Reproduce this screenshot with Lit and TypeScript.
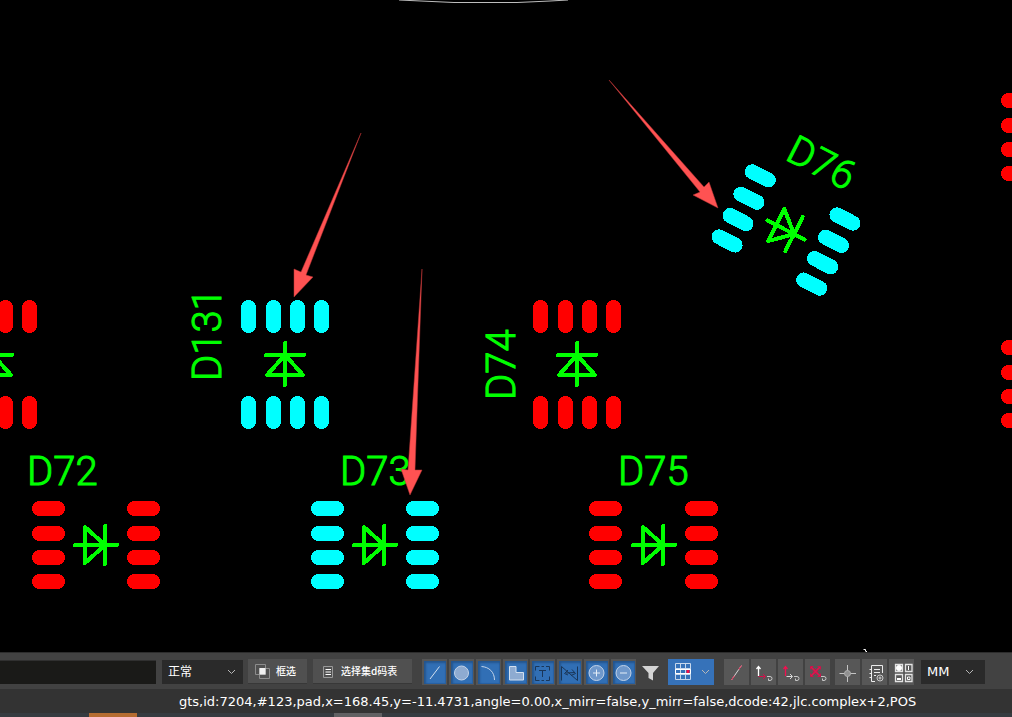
import { LitElement, html, css, svg } from "lit";
import { customElement } from "lit/decorators.js";

type Part = { x: number; y: number; angle: number; color: string; left?: number };
type Label = { x: number; y: number; angle: number; text: string };

const RED = "#ff0000";
const CYAN = "#00ffff";

const parts: Part[] = [
  { x: -7, y: 364, angle: -90, color: RED, left: -65 },
  { x: 285, y: 364, angle: -90, color: CYAN, left: -65 },
  { x: 577, y: 364, angle: -90, color: RED, left: -65 },
  { x: 96, y: 545, angle: 0, color: RED },
  { x: 375, y: 545, angle: 0, color: CYAN },
  { x: 654, y: 545, angle: 0, color: RED, left: -65 },
  { x: 786, y: 230, angle: 27, color: CYAN },
  { x: 1065, y: 137, angle: 0, color: RED },
  { x: 1065, y: 384, angle: 0, color: RED },
];

const labels: Label[] = [
  { x: 27, y: 485, angle: 0, text: "D72" },
  { x: 340, y: 485, angle: 0, text: "D73" },
  { x: 618, y: 485, angle: 0, text: "D75" },
  { x: 221, y: 381, angle: -90, text: "D131" },
  { x: 515, y: 400, angle: -90, text: "D74" },
  { x: 784, y: 159, angle: 27, text: "D76" },
];

const arrows = [
  "361,133 306,275 313,277 294,297 294,269 301,272",
  "422,269 415,470 422,470 410,495 401,469 408,470",
  "609,80 704,187 709,182 718,208 693,195 700,192",
];

const chevron = html`<svg class="chevron" viewBox="0 0 9 6" aria-hidden="true">
  <path d="M1 1 L4.5 4.5 L8 1" />
</svg>`;

const hook = svg`<path d="M16 17.500 h3 q2 0 2 2 q0 2 -2 2 h-1.500 v-2" stroke="#c8c8c8" />`;

const toggles = [
  { name: "Line", icon: svg`<path d="M8 20 L17.500 7.500" stroke="#d3e0f0" />` },
  { name: "Pad", icon: svg`<circle cx="12.500" cy="14" r="7" fill="#8eabd1" stroke="#c3d3e8" />` },
  { name: "Arc", icon: svg`<path d="M5.500 7.500 C13 8 18.500 13 18.500 21" stroke="#c3d3e8" />` },
  { name: "Surface", icon: svg`<path d="M6.500 7.500 H13 V13.500 H20.500 V21 H6.500 Z" fill="#8eabd1" stroke="#d3e0f0" />` },
  {
    name: "Text",
    icon: svg`<path d="M5.500 11.500 V7.500 H9.500 M11.500 7.500 H14 M16 7.500 H19.500 V11.500 M19.500 17.500 V21.500 H16 M14 21.500 H11.500 M9.500 21.500 H5.500 V17.500 M9 11.500 H16 M12.500 11.500 V18" stroke="#1a3658" />`,
  },
  {
    name: "Net",
    icon: svg`<path d="M4.500 21.500 V7.500 L20.500 21.500 V7.500 M7.500 14.500 L11 11 M7.500 14.500 L11 16 M9 14 L18 13.500 M15 10.500 L18.500 14.500 L14 16.500" stroke="#1a3658" />`,
  },
  {
    name: "Positive",
    icon: svg`<circle cx="12.500" cy="14" r="7.500" fill="#6f98cb" stroke="#c3d3e8" /><path d="M9 14 H16 M12.500 10.500 V17.500" stroke="#e4edf7" />`,
  },
  {
    name: "Negative",
    icon: svg`<circle cx="12.500" cy="14" r="7.500" fill="#6f98cb" stroke="#c3d3e8" /><path d="M9 14 H16" stroke="#e4edf7" />`,
  },
];

const snapTools = [
  {
    name: "Measure",
    icon: svg`<path d="M7.500 21 L17.500 6.500" stroke="#d8d8d8" /><path d="M7.500 21 L10.500 16.700 M14.800 10.500 L17.500 6.500" stroke="#e8305a" />`,
  },
  {
    name: "Vertical axis",
    icon: svg`<path d="M7.500 17 V8 M5.500 10 L7.500 7.500 L9.500 10" stroke="#ffffff" stroke-width="1.300" /><path d="M7.500 17.500 H14 M12 15 L14.500 17.500 L12 20" stroke="#d0104a" />${hook}`,
  },
  {
    name: "Horizontal axis",
    icon: svg`<path d="M7.500 17 V8 M5.500 10 L7.500 7.500 L9.500 10" stroke="#f01050" stroke-width="1.300" /><path d="M8.500 17.500 H14 M12 15 L14.500 17.500 L12 20" stroke="#d8d8d8" />${hook}`,
  },
  {
    name: "Clear snap",
    icon: svg`<path d="M6 8 L15 17 M15 8 L6 17" stroke="#e8104c" stroke-width="1.600" /><path d="M5.500 10.500 V7.500 H8.500 M12.500 7.500 H15.500 V10.500 M15.500 14.500 V17.500 H12.500 M8.500 17.500 H5.500 V14.500 M10.500 9.500 L13 12.500 L10.500 15.500 L8 12.500 Z" stroke="#d0104a" />${hook}`,
  },
];

const viewTools = [
  {
    name: "Origin",
    icon: svg`<path d="M4.500 14.500 H21 M12.500 6 V23" stroke="#c4c4c4" /><circle cx="12.500" cy="14.500" r="3" fill="#909090" stroke="#b0b0b0" />`,
  },
  {
    name: "Report settings",
    icon: svg`<path d="M13 22.500 H9.500 V6.500 H20.500 V14 M7.500 10.500 H10 M7.500 14.500 H10 M7.500 18.500 H10 M12 10.500 H18 M12 13.500 H18 M12 16.500 H14" stroke="#ececec" /><circle cx="18" cy="19" r="3" stroke="#c8c8c8" /><circle cx="18" cy="19" r="1" stroke="#d0d0d0" />`,
  },
  {
    name: "Layout",
    icon: svg`<path d="M6.500 5.500 H13.500 V12.500 H6.500 Z M16.500 5.500 H23 V12.500 H16.500 Z M6.500 15.500 H13.500 V22.500 H6.500 Z M16.500 15.500 H23 V22.500 H16.500 Z" stroke="#e4e4e4" stroke-width="1.300" /><circle cx="10" cy="9" r="3" fill="#fff" /><path d="M8 20 H12" stroke="#fff" stroke-width="2" /><path d="M19.500 7 V11 M18.500 18 H21 V20.500 H18.500 Z" stroke="#fff" />`,
  },
];

@customElement("pcb-canvas")
class PcbCanvas extends LitElement {
  static styles = css`
    :host { display: block; overflow: hidden; background: #000; }
    .board { display: block; width: 100%; height: 100%; }
    .copper { shape-rendering: crispEdges; }
    .diode { fill: none; stroke: #0f0; stroke-width: 4px; stroke-linecap: round; stroke-linejoin: round; }
    .label { fill: #0f0; stroke: #0f0; stroke-width: 1px; font: 300 40px Roboto, "Liberation Sans", sans-serif; }
    .arrow { fill: #ff5252; stroke: #b83434; stroke-width: 0.5px; }
    .outline { fill: none; stroke: #bdbdbd; }
  `;

  private part(p: Part) {
    return svg`<g class="copper" transform=${`translate(${p.x} ${p.y}) rotate(${p.angle})`}>
      ${[p.left ?? -64, 31].map((x) =>
        [-44, -19, 5, 29].map(
          (y) => svg`<rect x=${x} y=${y} width="33" height="15" rx="7.500" fill=${p.color} />`
        )
      )}
      <path class="diode" d="M-21 0 H21 M9 -19 V19 M9 0 L-11 -18 V18 Z" />
    </g>`;
  }

  render() {
    return html`<svg class="board" role="img" aria-label="PCB layout">
      <polyline class="outline" points="399,0 421,1 454,2.500 517,2.500 550,1 568,0" />
      ${parts.map((p) => this.part(p))}
      ${labels.map(
        (l) => svg`<text class="label" transform=${`translate(${l.x} ${l.y}) rotate(${l.angle})`}>${l.text}</text>`
      )}
      ${arrows.map((points) => svg`<polygon class="arrow" points=${points} />`)}
      <path d="M863.500 649.500 h2 v1.500 M865.500 651.500 h1.500" fill="none" stroke="#fff" />
    </svg>`;
  }
}

@customElement("app-root")
class AppRoot extends LitElement {
  static styles = css`
    :host {
      display: flex;
      flex-direction: column;
      height: 100vh;
      overflow: hidden;
      background: #000;
      color: #fff;
      font-family: "DejaVu Sans", "Noto Sans CJK SC", sans-serif;
    }
    pcb-canvas { flex: 1; min-height: 0; }
    .toolbar {
      display: flex;
      align-items: center;
      box-sizing: border-box;
      height: 37px;
      padding: 1px 27px 0 0;
      background: #424242;
      border-top: 1px solid #2c2c2c;
    }
    button, select, input { margin: 0; border: 0; padding: 0; color: #fff; font-family: inherit; }
    svg { fill: none; }
    .command { flex: 1; min-width: 0; height: 24px; background: #1a1a18; border-top: 1px solid #303030; box-sizing: border-box; }
    .picker { display: grid; align-items: center; background: #2a2a2a; }
    .picker > * { grid-area: 1 / 1; }
    .picker select { appearance: none; width: 100%; height: 24px; padding: 0 6px; background: transparent; font-size: 13px; }
    .mode { width: 81px; margin: 0 5px 0 6px; }
    .mode select { font-size: 12px; }
    .unit { width: 64px; margin-left: 7px; }
    .chevron { width: 9px; height: 6px; stroke: #b8b8b8; justify-self: end; margin-right: 7px; pointer-events: none; }
    .unit .chevron { margin-right: 11px; }
    .action {
      display: flex;
      align-items: center;
      height: 25px;
      padding: 0 0 0 7px;
      gap: 6px;
      margin-right: 6px;
      background: #505050;
      border-bottom: 1px solid #383838;
      font-family: "Noto Sans CJK SC", sans-serif;
      font-size: 10px;
      font-weight: 500;
      line-height: 12px;
      white-space: nowrap;
    }
    .frame { width: 59px; }
    .codes { width: 99px; padding-left: 8px; gap: 7px; margin-right: 10px; }
    .action svg { width: 15px; height: 15px; flex: none; }
    .codes svg { width: 13px; }
    .group { display: flex; gap: 2px; }
    .tool, .toggle { display: block; width: 25px; height: 26px; }
    .tool svg, .toggle svg { display: block; width: 25px; height: 26px; }
    .toggle {
      background: #316fb5;
      box-shadow: inset 2px 2px #555, inset -1px -1px #555, inset 4px 4px 2px #24568f, inset -2px -2px 1px #295f9f;
    }
    .tool { background: #575757; }
    .filter { width: 32px; height: 26px; background: transparent; }
    .filter svg { display: block; width: 32px; height: 26px; }
    .grid { display: flex; align-items: center; justify-content: space-between; width: 46px; height: 26px; margin-right: 10px; background: #3672b9; }
    .grid .chevron { margin-right: 4px; }
    .grid-icon { width: 28px; height: 26px; }
    .views { margin-left: 5px; }
    .status {
      box-sizing: border-box;
      height: 24px;
      padding: 1px 0 0 179px;
      overflow: hidden;
      background: #333;
      font-size: 13px;
      line-height: 24px;
      white-space: nowrap;
    }
    .taskbar { display: flex; height: 4px; padding-left: 89px; gap: 197px; background: #363b40; }
    .task { width: 48px; background: #616163; }
    .active { background: #b56c31; }
  `;

  private tools(list: { name: string; icon: unknown }[], kind: string) {
    return list.map(
      (t) => html`<button class=${kind} title=${t.name} aria-label=${t.name}>
        <svg viewBox="0 0 25 26" aria-hidden="true">${t.icon}</svg>
      </button>`
    );
  }

  render() {
    return html`
      <pcb-canvas></pcb-canvas>
      <div class="toolbar" role="toolbar">
        <input class="command" aria-label="Command" />
        <div class="picker mode">
          <select aria-label="Mode"><option>正常</option></select>
          ${chevron}
        </div>
        <button class="action frame">
          <svg viewBox="0 0 15 15" aria-hidden="true">
            <path d="M0.500 0.500 H10.500 V10.500 H0.500 Z M4.500 4.500 H14.500 V14.500 H4.500 Z" stroke="#8c8c8c" />
            <path d="M4.500 4 H10.500 V10.500 H4.500 Z" fill="#f0f0f0" />
          </svg>框选
        </button>
        <button class="action codes">
          <svg viewBox="0 0 13 15" aria-hidden="true">
            <path d="M2.500 2.500 H11.500 V13.500 H2.500 Z" stroke="#999" />
            <path d="M4.500 5.500 H10 M4.500 8 H10 M4.500 10.500 H10" stroke="#fff" />
          </svg>选择集d码表
        </button>
        <div class="group">${this.tools(toggles, "toggle")}</div>
        <button class="filter" title="Filter" aria-label="Filter">
          <svg viewBox="0 0 32 26" aria-hidden="true">
            <path d="M6 7 H23 L17 14 V21.500 L12.500 19 V14 Z" fill="#d4d4d4" />
          </svg>
        </button>
        <button class="grid" title="Grid" aria-label="Grid">
          <svg class="grid-icon" viewBox="0 0 28 26" aria-hidden="true">
            <path d="M7.500 4.500 H22.500 V20.500 H7.500 Z M12.500 4.500 V20.500 M17.500 4.500 V20.500 M7.500 9.500 H22.500 M7.500 15.500 H22.500" stroke="#c6d7ec" />
            <path d="M7.500 10.500 H22.500 V14.500 H7.500 Z" stroke="#fff" />
            <path d="M18.500 11 H21.500 V14 H18.500 Z" fill="#f01048" />
          </svg>
          ${chevron}
        </button>
        <div class="group">${this.tools(snapTools, "tool")}</div>
        <div class="group views">${this.tools(viewTools, "tool")}</div>
        <div class="picker unit">
          <select aria-label="Unit"><option>MM</option></select>
          ${chevron}
        </div>
      </div>
      <div class="status" role="status">gts,id:7204,#123,pad,x=168.45,y=-11.4731,angle=0.00,x_mirr=false,y_mirr=false,dcode:42,jlc.complex+2,POS</div>
      <div class="taskbar"><span class="task active"></span><span class="task"></span></div>
    `;
  }
}
